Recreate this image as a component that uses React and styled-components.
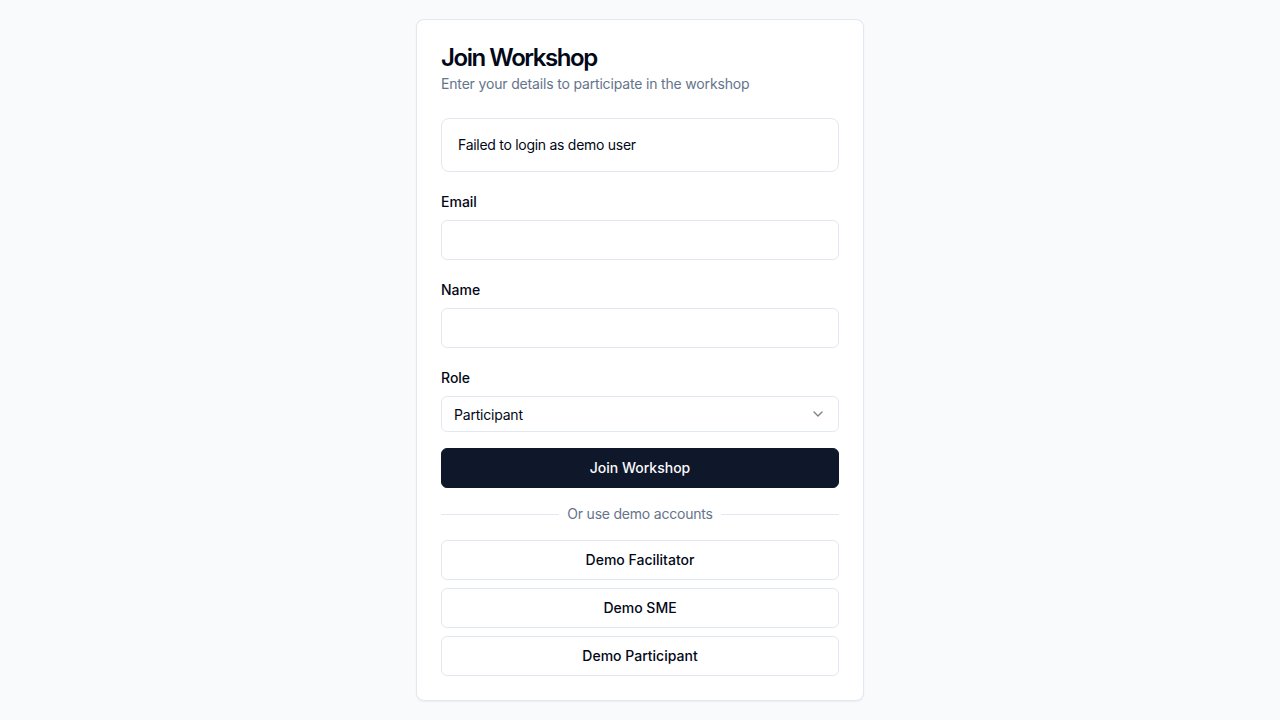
import React, { useState } from "react";
import styled, { createGlobalStyle } from "styled-components";
import { ChevronDown } from "lucide-react";

const GlobalStyle = createGlobalStyle`
  * { box-sizing: border-box; }
  body {
    margin: 0;
    background: #f8fafc;
    font-family: Inter, "Noto Sans", sans-serif;
    color: #020817;
  }
`;

const Page = styled.div`
  min-height: 100vh;
  display: flex;
  align-items: center;
  justify-content: center;
`;

const Card = styled.div`
  width: 448px;
  background: #fff;
  border: 1px solid #e2e8f0;
  border-radius: 8px;
  box-shadow: 0 1px 2px rgba(0, 0, 0, 0.05);
`;

const Header = styled.div`
  display: flex;
  flex-direction: column;
  gap: 4px;
  padding: 26px 24px 24px;
`;

const Title = styled.h1`
  margin: 0;
  font-size: 24px;
  line-height: 24px;
  font-weight: 600;
  letter-spacing: -0.06em;
`;

const Description = styled.p`
  margin: 0;
  font-size: 14px;
  line-height: 20px;
  color: #64748b;
  letter-spacing: -0.012em;
`;

const Content = styled.div`
  padding: 0 24px 24px;
  display: flex;
  flex-direction: column;
`;

const Alert = styled.div`
  border: 1px solid #e2e8f0;
  border-radius: 8px;
  padding: 16px;
  font-size: 14px;
  line-height: 20px;
  letter-spacing: -0.02em;
  margin-bottom: 20px;
`;

const Form = styled.form`
  display: flex;
  flex-direction: column;
  gap: 20px;
`;

const Field = styled.div`
  display: flex;
  flex-direction: column;
  gap: 9px;
`;

const Label = styled.label`
  font-size: 14px;
  line-height: 19px;
  font-weight: 500;
`;

const Input = styled.input`
  height: 40px;
  width: 100%;
  border: 1px solid #e2e8f0;
  border-radius: 6px;
  padding: 0 12px;
  font: inherit;
  font-size: 14px;
  background: #fff;
  outline: none;
`;

const SelectBox = styled.button`
  height: 36px;
  width: 100%;
  display: flex;
  align-items: center;
  justify-content: space-between;
  border: 1px solid #e2e8f0;
  border-radius: 6px;
  padding: 0 12px;
  background: #fff;
  font-family: inherit;
  font-size: 14px;
  letter-spacing: -0.015em;
  color: #020817;
  cursor: pointer;
  svg {
    opacity: 0.5;
  }
`;

const Button = styled.button`
  height: 40px;
  width: 100%;
  border-radius: 6px;
  font-family: inherit;
  font-size: 14px;
  font-weight: 500;
  line-height: 18px;
  cursor: pointer;
  border: 1px solid ${(p) => (p.$primary ? "#0f172a" : "#e2e8f0")};
  background: ${(p) => (p.$primary ? "#0f172a" : "#fff")};
  color: ${(p) => (p.$primary ? "#f8fafc" : "#020817")};
  padding: 0 0 1px;
`;

const Actions = styled.div`
  display: flex;
  flex-direction: column;
  gap: 16px;
  margin-top: -4px;
`;

const Divider = styled.div`
  display: flex;
  align-items: center;
  gap: 8px;
  font-size: 14px;
  line-height: 20px;
  letter-spacing: -0.015em;
  color: #64748b;
  &::before,
  &::after {
    content: "";
    flex: 1;
    height: 1px;
    background: #e2e8f0;
  }
`;

const DemoList = styled.div`
  display: flex;
  flex-direction: column;
  gap: 8px;
`;

const demos = ["Demo Facilitator", "Demo SME", "Demo Participant"];

export default function App() {
  const [email, setEmail] = useState("");
  const [name, setName] = useState("");

  return (
    <>
      <GlobalStyle />
      <Page>
        <Card>
          <Header>
            <Title>Join Workshop</Title>
            <Description>Enter your details to participate in the workshop</Description>
          </Header>
          <Content>
            <Alert>Failed to login as demo user</Alert>
            <Form onSubmit={(e) => e.preventDefault()}>
              <Field>
                <Label htmlFor="email">Email</Label>
                <Input id="email" type="email" value={email} onChange={(e) => setEmail(e.target.value)} />
              </Field>
              <Field>
                <Label htmlFor="name">Name</Label>
                <Input id="name" value={name} onChange={(e) => setName(e.target.value)} />
              </Field>
              <Field>
                <Label>Role</Label>
                <SelectBox type="button">
                  <span>Participant</span>
                  <ChevronDown size={16} strokeWidth={2} />
                </SelectBox>
              </Field>
              <Actions>
                <Button $primary type="submit">Join Workshop</Button>
                <Divider>Or use demo accounts</Divider>
                <DemoList>
                  {demos.map((d) => (
                    <Button key={d} type="button">{d}</Button>
                  ))}
                </DemoList>
              </Actions>
            </Form>
          </Content>
        </Card>
      </Page>
    </>
  );
}
